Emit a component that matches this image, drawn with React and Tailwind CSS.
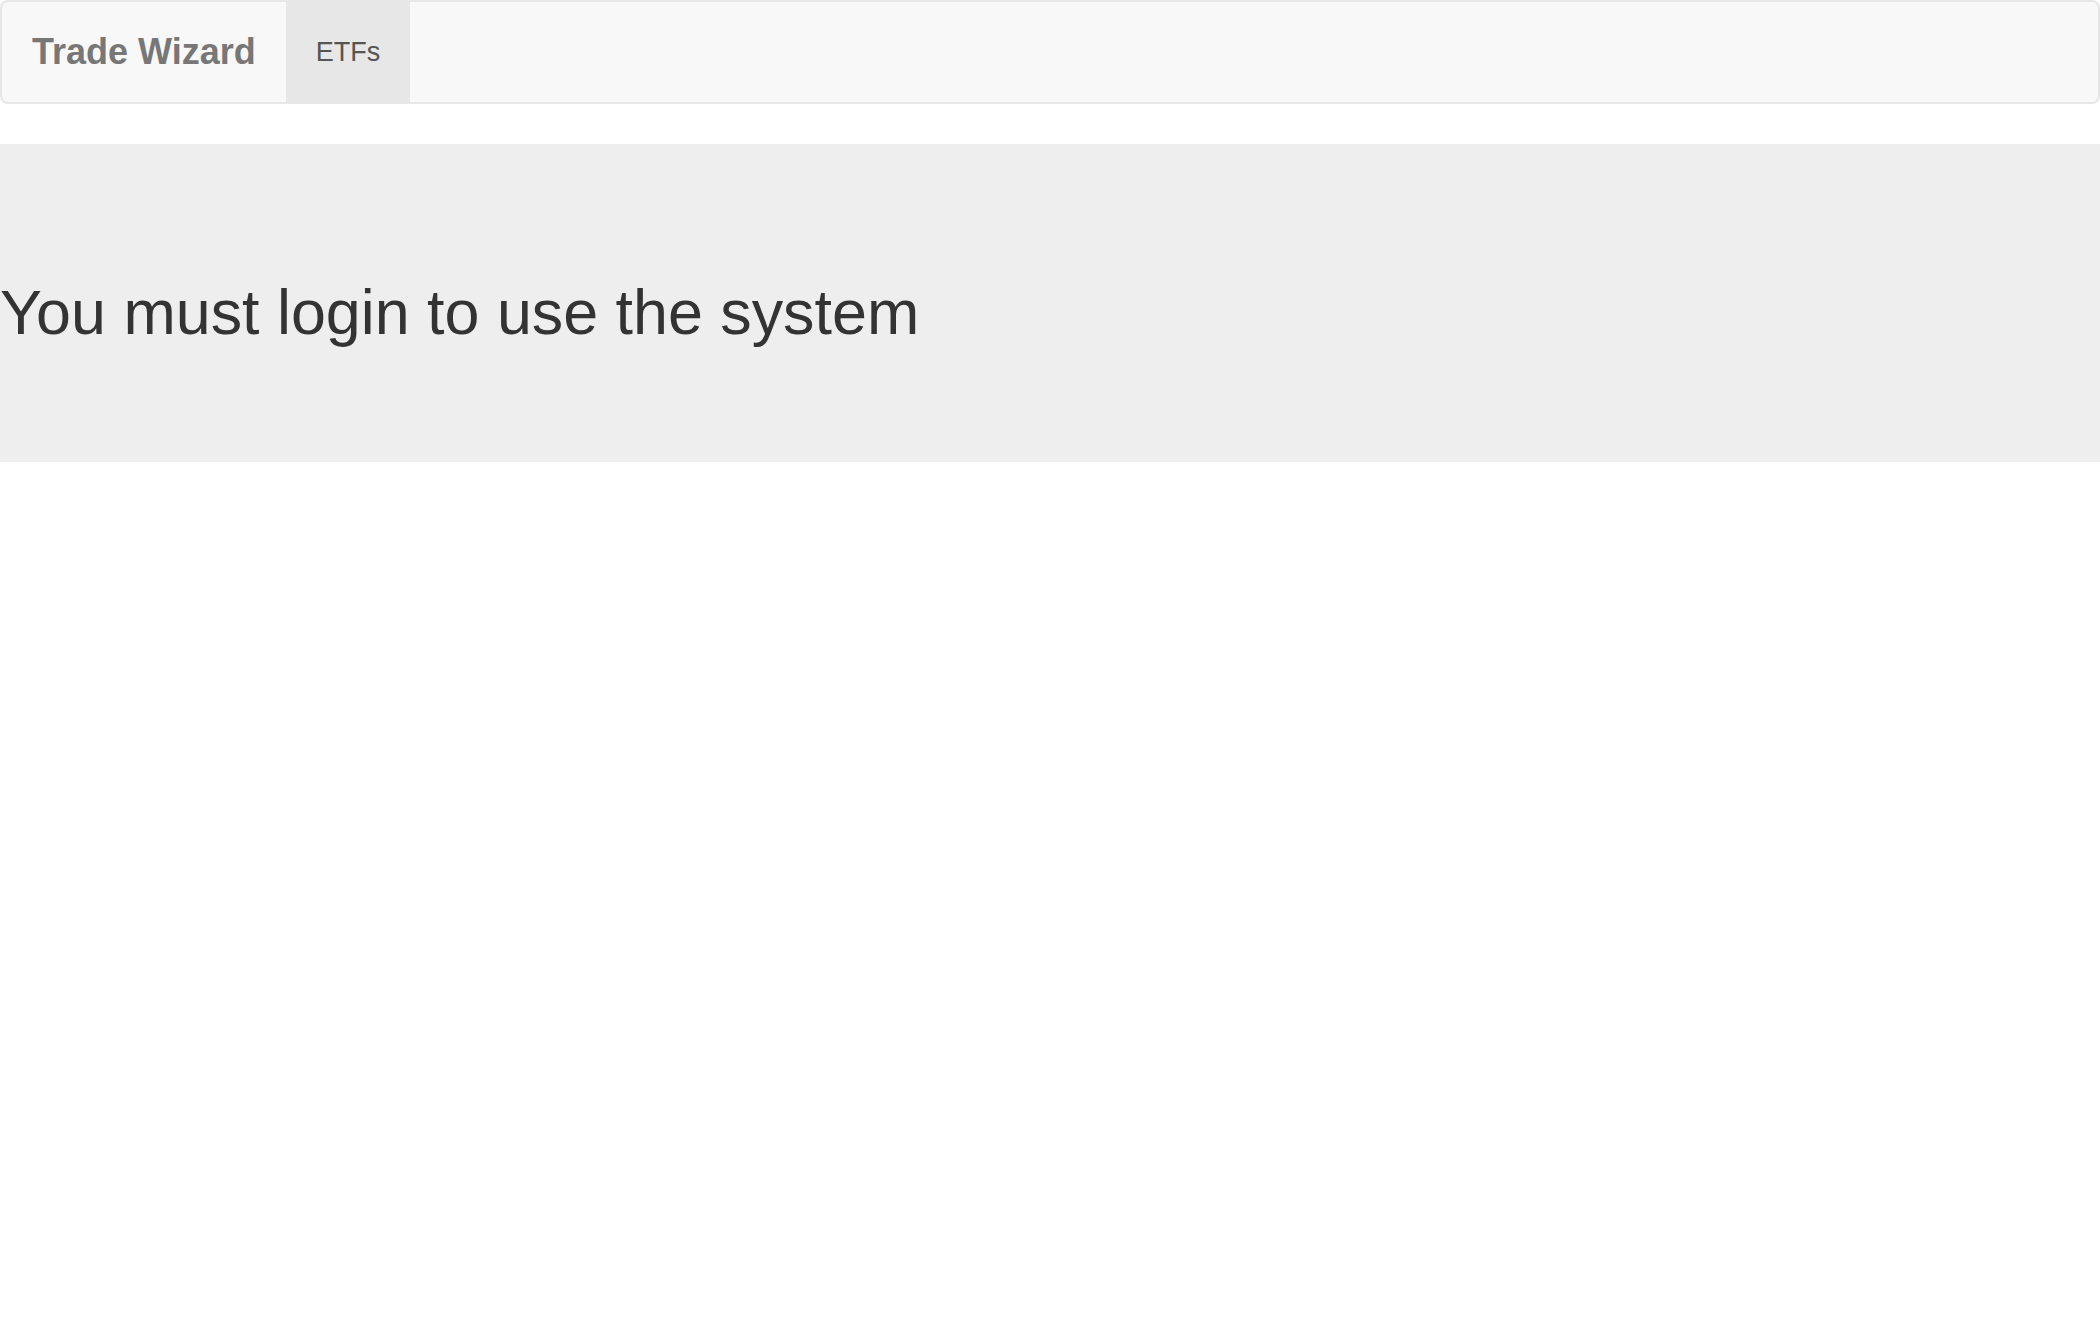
export default function App() {
  return (
    <div className="min-h-screen bg-white" style={{ fontFamily: '"Liberation Sans", Arial, Helvetica, sans-serif' }}>
      <nav className="mb-[40px] flex h-[104px] rounded-[8px] border-2 border-[#e7e7e7] bg-[#f8f8f8]">
        <a className="block px-[30px] py-[30px] text-[36px] font-bold leading-[40px] text-[#777777]">Trade Wizard</a>
        <a className="block bg-[#e7e7e7] px-[30px] py-[30px] text-[27px] leading-[40px] text-[#555555]">ETFs</a>
      </nav>
      <div className="bg-[#eeeeee] pt-[134px] pb-[116px]">
        <h1 className="m-0 text-[62.8px] font-normal leading-[68px] text-[#333333]">You must login to use the system</h1>
      </div>
    </div>
  );
}
